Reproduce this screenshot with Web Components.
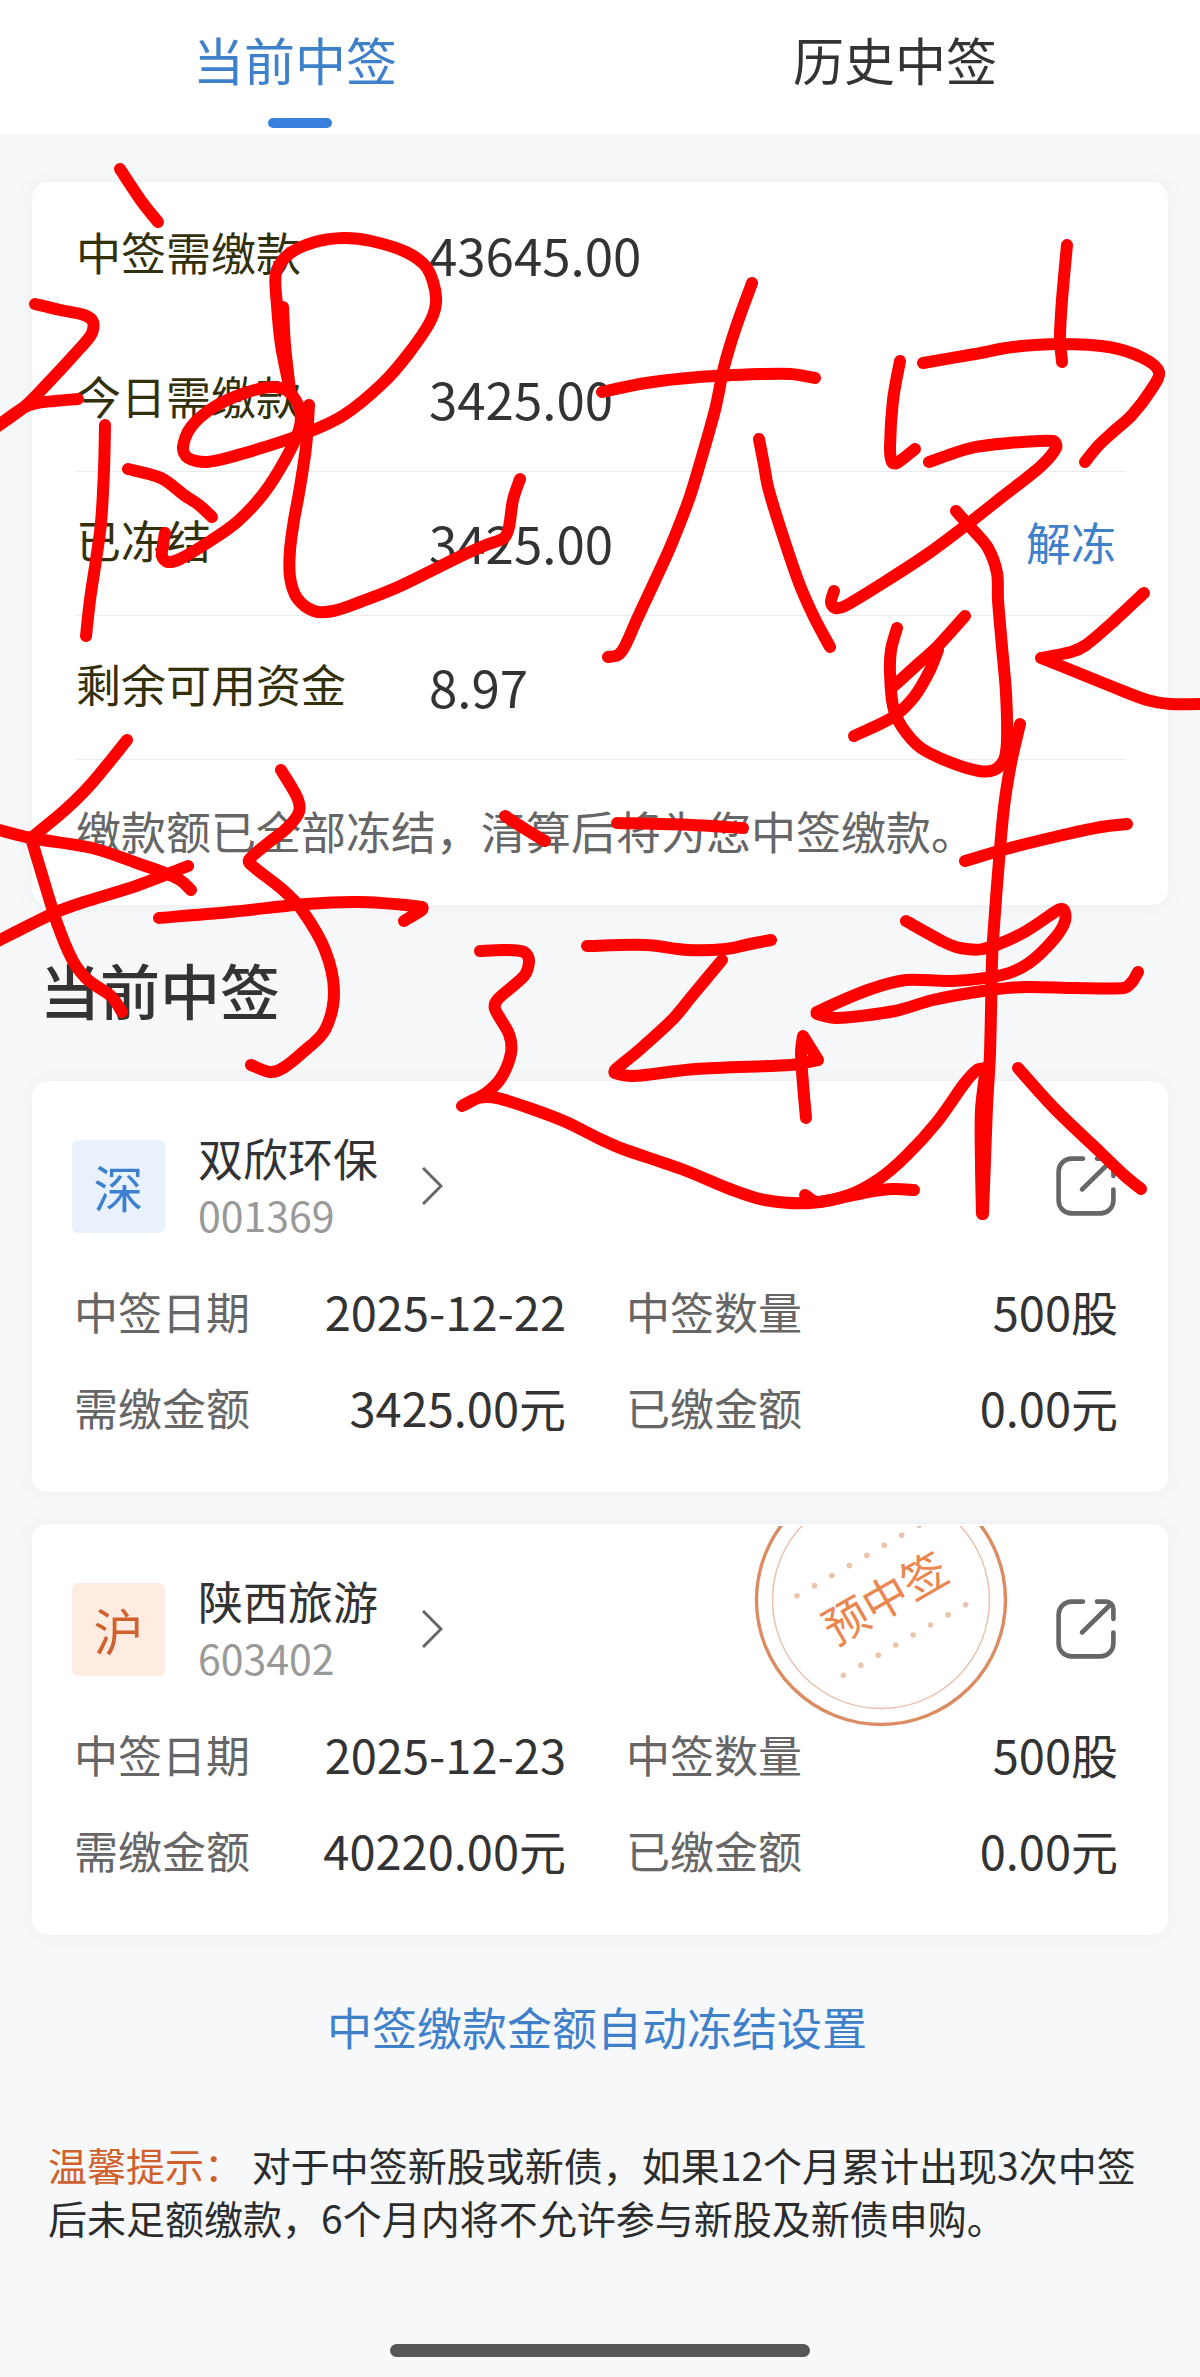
<!DOCTYPE html>
<html lang="zh-CN">
<head>
<meta charset="utf-8">
<meta name="viewport" content="width=device-width, initial-scale=1">
<title>当前中签</title>
<style>
  :root {
    --blue: #3f80ca;
    --ink: #333;
    --muted: #666;
    --faint: #999;
    --orange: #d0602c;
    --page: #f6f8fa;
  }
  body {
    margin: 0;
    background: var(--page);
    color: var(--ink);
    font-family: "Noto Sans CJK SC", "Noto Sans", sans-serif;
  }
</style>
</head>
<body>
<lottery-page>
  <tab-bar slot="header">
    <tab-item selected>当前中签</tab-item>
    <tab-item>历史中签</tab-item>
  </tab-bar>

  <fund-card>
    <fund-row label="中签需缴款" plain>43645.00</fund-row>
    <fund-row label="今日需缴款">3425.00</fund-row>
    <fund-row label="已冻结" action="解冻">3425.00</fund-row>
    <fund-row label="剩余可用资金">8.97</fund-row>
    <span slot="note">缴款额已全部冻结，清算后将为您中签缴款。</span>
  </fund-card>

  <section-title>当前中签</section-title>

  <stock-list>
    <stock-card market="深" tone="blue" name="双欣环保" code="001369">
      <stock-field label="中签日期">2025-12-22</stock-field>
      <stock-field label="中签数量">500股</stock-field>
      <stock-field label="需缴金额">3425.00元</stock-field>
      <stock-field label="已缴金额">0.00元</stock-field>
    </stock-card>
    <stock-card market="沪" tone="orange" name="陕西旅游" code="603402">
      <pre-stamp slot="stamp">预中签</pre-stamp>
      <stock-field label="中签日期">2025-12-23</stock-field>
      <stock-field label="中签数量">500股</stock-field>
      <stock-field label="需缴金额">40220.00元</stock-field>
      <stock-field label="已缴金额">0.00元</stock-field>
    </stock-card>
  </stock-list>

  <setting-link>中签缴款金额自动冻结设置</setting-link>

  <warm-tip label="温馨提示：">对于中签新股或新债，如果12个月累计出现3次中签后未足额缴款，6个月内将不允许参与新股及新债申购。</warm-tip>

  <home-bar slot="footer"></home-bar>
  <ink-layer slot="overlay"></ink-layer>
</lottery-page>

<script>
const define = (name, render, after) => customElements.define(name, class extends HTMLElement {
  connectedCallback() {
    if (this.shadowRoot) return;
    const root = this.attachShadow({ mode: 'open' });
    root.innerHTML = render(this);
    if (after) after(root, this);
  }
});

define('lottery-page', () => `
  <style>
    :host { display: flex; flex-direction: column; position: relative; min-height: 100vh; overflow: hidden; }
    main { padding: 48px 32px 0; }
    footer { margin-top: auto; }
  </style>
  <header><slot name="header"></slot></header>
  <main><slot></slot></main>
  <footer><slot name="footer"></slot></footer>
  <slot name="overlay"></slot>`);

define('tab-bar', () => `
  <style>
    :host { display: block; background: #fff; }
    nav { display: flex; }
    ::slotted(*) { flex: 1; }
  </style>
  <nav><slot></slot></nav>`);

define('tab-item', el => `
  <style>
    :host { display: flex; }
    button {
      flex: 1; display: flex; flex-direction: column; align-items: center;
      border: 0; margin: 0; padding: 23px 0 6px; background: none; color: var(--ink);
      font: 51px/72px "Noto Sans CJK SC", sans-serif; cursor: pointer;
    }
    span { padding-right: 10px; }
    i { width: 64px; height: 10px; margin-top: 23px; border-radius: 5px; }
    :host([selected]) button { color: var(--blue); }
    :host([selected]) i { background: #3880dc; }
  </style>
  <button type="button" aria-pressed="${el.hasAttribute('selected')}"><span><slot></slot></span><i></i></button>`);

define('fund-card', () => `
  <style>
    :host {
      display: block; padding: 2px 42px 1px 44px; background: #fff; border-radius: 16px;
      box-shadow: 0 0 20px rgba(60, 70, 80, .06);
    }
    p { display: flex; align-items: center; height: 140px; margin: 0; padding-bottom: 4px; font-size: 45px; color: var(--muted); }
  </style>
  <slot></slot>
  <p><slot name="note"></slot></p>`);

define('fund-row', el => `
  <style>
    :host {
      display: flex; align-items: center; box-sizing: border-box; height: 144px;
      padding-bottom: 3px; border-bottom: 1px solid #ebebeb; line-height: 66px;
    }
    :host([plain]) { border-bottom-color: transparent; }
    .label { flex: 0 0 353px; padding-bottom: 4px; font-size: 45px; color: #33300c; }
    .value { flex: 1; font-size: 51px; }
    button { border: 0; margin: 0; padding: 0 10px 0 0; background: none; color: var(--blue); font: 45px/66px "Noto Sans CJK SC", sans-serif; cursor: pointer; }
  </style>
  <span class="label">${el.getAttribute('label')}</span>
  <span class="value"><slot></slot></span>
  ${el.hasAttribute('action') ? `<button type="button">${el.getAttribute('action')}</button>` : ''}`);

define('section-title', () => `
  <style>
    :host { display: block; }
    h2 { margin: 0; padding: 44px 8px 52px; font-size: 60px; line-height: 80px; font-weight: 500; }
  </style>
  <h2><slot></slot></h2>`);

define('stock-list', () => `
  <style>:host { display: flex; flex-direction: column; gap: 32px; }</style>
  <slot></slot>`);

define('stock-card', el => `
  <style>
    :host {
      display: block; position: relative; padding: 48px 50px 37px 40px; background: #fff;
      border-radius: 16px; box-shadow: 0 0 20px rgba(60, 70, 80, .06);
    }
    .head { display: flex; align-items: center; height: 114px; }
    .market {
      display: flex; align-items: center; justify-content: center; width: 93px; height: 93px;
      margin-right: 33px; border-radius: 6px; background: #e9f1fd; color: #3d80d0; font-size: 50px; line-height: 72px;
    }
    :host([tone="orange"]) .market { background: #feece3; color: var(--orange); }
    .title { display: flex; align-items: center; gap: 44px; color: inherit; text-decoration: none; }
    .names { display: flex; flex-direction: column; line-height: 57px; }
    .name { font-size: 45px; }
    .code { font-size: 41px; color: var(--faint); }
    .share { margin-left: auto; padding: 0 2px 0 0; border: 0; background: none; cursor: pointer; }
    svg { display: block; fill: none; stroke: var(--muted); }
    dl { display: grid; grid-template-columns: 1fr 1fr; column-gap: 60px; margin: 20px 0 0 2px; }
    .stamp { position: absolute; top: 2px; right: 160px; }
  </style>
  <div class="stamp"><slot name="stamp"></slot></div>
  <div class="head">
    <span class="market">${el.getAttribute('market')}</span>
    <a class="title" href="#stock">
      <span class="names">
        <span class="name">${el.getAttribute('name')}</span>
        <span class="code">${el.getAttribute('code')}</span>
      </span>
      <svg width="21" height="38" viewBox="0 0 21 38" stroke-width="3"><path d="M1 1 19 19 1 37"/></svg>
    </a>
    <button class="share" type="button" aria-label="分享">
      <svg width="60" height="60" viewBox="0 0 60 60" stroke-width="4.6" stroke-linecap="round" stroke-linejoin="round">
        <path d="M27 2.6H15.5A13 13 0 0 0 2.6 15.5V44.5A13 13 0 0 0 15.5 57.4H44.5A13 13 0 0 0 57.4 44.5V33.5"/>
        <path d="M41 2.6H50A7.4 7.4 0 0 1 57.4 10V20"/>
        <path d="M55 5 26 33.5"/>
      </svg>
    </button>
  </div>
  <dl><slot></slot></dl>`);

define('stock-field', el => `
  <style>
    :host { display: flex; justify-content: space-between; align-items: center; line-height: 96px; white-space: nowrap; }
    dt { font-size: 44px; color: var(--muted); }
    dd { margin: 0; font-size: 47px; }
  </style>
  <dt>${el.getAttribute('label')}</dt>
  <dd><slot></slot></dd>`);

define('pre-stamp', el => {
  const dots = (x, y) => Array.from({ length: 8 }, (_, i) =>
    `<circle cx="${x + i * 17.45}" cy="${y - i * 10.07}" r="2.8"/>`).join('');
  return `
  <style>
    :host { display: block; }
    svg { display: block; }
    text { font: 45px "Noto Sans CJK SC", sans-serif; fill: #ea8650; text-anchor: middle; }
  </style>
  <svg width="254" height="202" viewBox="0 0 254 202">
    <circle cx="127" cy="74" r="124.5" fill="none" stroke="#dc8c63" stroke-width="3.4"/>
    <circle cx="127" cy="74" r="108.5" fill="none" stroke="#e9c3ae" stroke-width="1.5"/>
    <g fill="#ecc4ae">${dots(43, 69.7)}${dots(89.4, 149.3)}</g>
    <text transform="translate(131 72) rotate(-30)" y="17">${el.textContent}</text>
  </svg>`;
});

define('setting-link', () => `
  <style>
    :host { display: flex; justify-content: center; margin-top: 59px; }
    a { padding-right: 6px; color: var(--blue); font-size: 45px; line-height: 66px; text-decoration: none; }
  </style>
  <a href="#freeze"><slot></slot></a>`);

define('warm-tip', el => `
  <style>
    :host { display: block; }
    p { margin: 78px 16px 0; font-size: 39px; line-height: 53px; color: #2c2c2c; }
    strong { font-weight: 400; color: var(--orange); }
  </style>
  <p><strong>${el.getAttribute('label')}</strong> <slot></slot></p>`);

define('home-bar', () => `
  <style>
    :host { display: flex; justify-content: center; padding: 24px 0 20px; }
    div { width: 35%; height: 13px; border-radius: 7px; background: #555756; }
  </style>
  <div></div>`);

/* Pen strokes as lists of x,y points; a point given twice makes a sharp turn. */
const STROKES = [
  '120,169 142,202 158,222',
  '35,304 60,310 84,315 93,322 91,335 73,356 48,383 23,408 -8,430',
  '-8,430 23,408 38,403 55,401 78,399',
  '105,425 104,470 101,523 96,560 90,600 86,636',
  '128,469 161,478 184,495 199,505 212,517',
  '283,307 285,345 290,390',
  '290,390 281,345 277,305 276,273 289,254 315,242 344,238 371,241 406,252 427,268 436,297 431,320 409,353 383,383 344,415 306,433 245,453 207,462 188,458 183,447 191,427 214,407 245,393 272,387 289,392 300,410 299,430 285,460 264,493 237,522 207,543 180,559 168,562 162,556 163,545 165,533',
  '309,405 306,447 299,493 294,520 290,550 290,577 297,598 314,611 333,611 360,602 398,587 459,557 486,545 504,538 509,527 513,500 520,479',
  '602,392 646,383 699,377 761,374 791,374 815,378',
  '752,283 736,327 724,367 715,410 696,477 688,502 669,550 638,617 625,646 618,655 608,657',
  '759,439 764,465 768,487 780,527 799,583 814,617 830,647',
  '1067,245 1062,300 1060,337 1062,362',
  '900,361 893,400 890,447 892,462 897,463 915,449',
  '923,363 975,354 1013,347 1059,344 1109,347 1143,358 1159,372 1151,390 1132,415 1113,432 1098,446 1085,462',
  '929,462 971,448 1009,443 1053,441 1056,448 1040,467 1002,497 969,523 929,553 883,583 845,606 835,608 831,602 834,591',
  '956,511 973,530 988,548 997,573 998,600 1002,647 1006,693 1007,740 1004,760 994,770 979,771 952,763 921,748 902,727 893,706 890,673 891,650 897,628',
  '965,616 937,647 918,664 895,685',
  '938,650 938,650 929,672 914,697 893,717 854,736',
  '1144,593 1113,622 1086,645 1071,652 1041,658 1041,658 1071,670 1113,687 1147,700 1170,704 1206,704',
  '127,740 92,783 65,810 31,838 31,838 40,868 57,923 73,961 88,980 111,996 122,1012',
  '-8,828 31,838 92,848 134,862 165,873 180,880 191,890',
  '188,866 165,875 130,888 84,902 54,913 -8,944',
  '281,770 297,797 299,812 287,828 268,843 249,860 255,868 283,890 302,910 325,950 334,992 325,1030 302,1053 283,1068 270,1072 251,1065',
  '159,918 230,912 306,904 360,902 422,907 422,910 404,921',
  '480,951 505,950 524,952 529,961 524,976 498,999 495,1009 509,1034 511,1053 501,1078 486,1093 462,1106 462,1106 478,1098 497,1098 532,1109 566,1122 600,1139 623,1149 684,1170 730,1189 765,1200 810,1203 849,1195 879,1179 906,1156 937,1122 964,1084 977,1070 986,1068',
  '805,1195 818,1202 868,1192 893,1189 914,1190',
  '587,946 646,945 688,950 726,949 750,944 771,940',
  '722,960 692,996 673,1019 638,1051 615,1070 615,1073 634,1076 696,1069 791,1065 818,1060 818,1060 803,1036 803,1036 801,1053 803,1084 806,1118',
  '965,861 1006,849 1063,835 1101,827 1127,824',
  '1020,724 1011,763 1004,807 998,873 993,940 992,961 990,1053 987,1107 985,1160 983,1214',
  '986,1068 981,1110 981,1165 982,1214',
  '906,921 944,942 960,948 983,949 1021,934 1058,910 1064,910 1065,921 1055,938 1029,963 1002,975 952,981 906,980 868,990 817,1012 817,1014 837,1018 895,1011 933,1000 983,991 1025,987 1075,988 1124,988 1132,982 1138,972',
  '1018,1068 1055,1109 1101,1153 1125,1176 1141,1189',
  '505,816 525,829 545,841',
  '617,823 692,825 743,828'
];

/* Catmull-Rom spline through the points, written as cubic segments. */
const smooth = list => {
  const p = list.split(' ').map(s => s.split(',').map(Number));
  const at = i => p[Math.max(0, Math.min(p.length - 1, i))];
  let d = `M${p[0]}`;
  for (let i = 0; i < p.length - 1; i++) {
    const [a, b, c, e] = [at(i - 1), at(i), at(i + 1), at(i + 2)];
    /* handles are kept no longer than a third of the segment, so short ones do not loop */
    const len = Math.hypot(c[0] - b[0], c[1] - b[1]);
    const handle = (u, v) => {
      const x = (v[0] - u[0]) / 6, y = (v[1] - u[1]) / 6;
      const k = Math.min(1, len / 3 / (Math.hypot(x, y) || 1));
      return [x * k, y * k];
    };
    const h1 = handle(a, c), h2 = handle(b, e);
    d += `C${[b[0] + h1[0], b[1] + h1[1]]} ${[c[0] - h2[0], c[1] - h2[1]]} ${c}`;
  }
  return d;
};

define('ink-layer', () => `
  <style>
    :host { display: block; position: absolute; inset: 0; pointer-events: none; }
    svg { display: block; width: 100%; fill: none; stroke: #fe0000; stroke-width: 12; stroke-linecap: round; stroke-linejoin: round; }
  </style>
  <svg viewBox="0 0 1200 2377" aria-hidden="true">${STROKES.map(s => `<path d="${smooth(s)}"/>`).join('')}</svg>`);
</script>
</body>
</html>
